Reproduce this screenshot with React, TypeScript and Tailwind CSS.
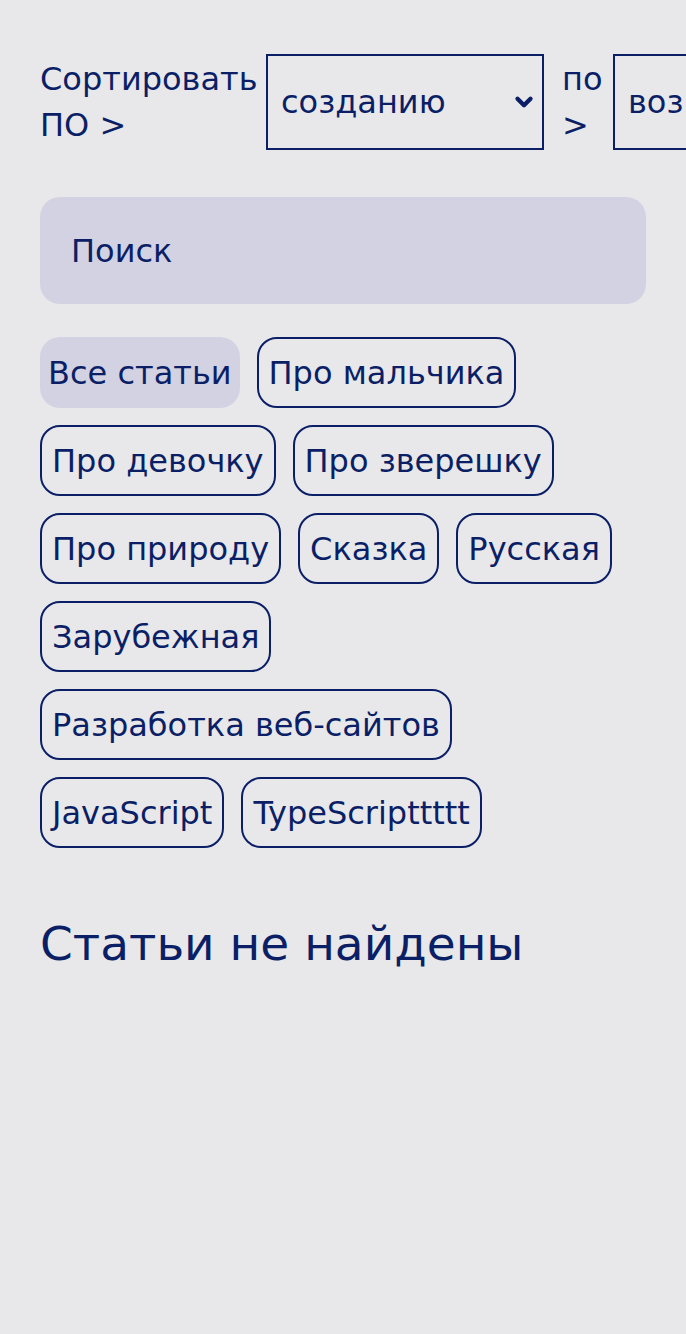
import { ChevronDown } from "lucide-react";

const tags = [
  "Про мальчика",
  "Про девочку",
  "Про зверешку",
  "Про природу",
  "Сказка",
  "Русская",
  "Зарубежная",
  "Разработка веб-сайтов",
  "JavaScript",
  "TypeScripttttt",
];

export default function App() {
  return (
    <main
      className="min-h-screen overflow-hidden bg-[#e8e8eb] px-10 pt-[54px] text-[#0b1f66]"
      style={{ fontFamily: '"DejaVu Sans", sans-serif' }}
    >
      <div className="flex w-[800px] items-center">
        <label className="w-[220px] shrink-0 text-[32px] leading-[46px]">Сортировать ПО &gt;</label>
        <div className="relative ml-[6px] h-[96px] w-[278px] shrink-0 border-2 border-[#0b1f66]">
          <select className="h-full w-full appearance-none bg-transparent pl-[13px] text-[32px] text-[#0b1f66] outline-none">
            <option>созданию</option>
          </select>
          <ChevronDown className="pointer-events-none absolute right-[5px] top-[33px] h-[26px] w-[26px]" strokeWidth={4} />
        </div>
        <label className="ml-[18px] w-[44px] shrink-0 text-[32px] leading-[46px]">по &gt;</label>
        <div className="relative ml-[7px] h-[96px] w-[278px] shrink-0 border-2 border-[#0b1f66]">
          <select className="h-full w-full appearance-none bg-transparent pl-[13px] text-[32px] text-[#0b1f66] outline-none">
            <option>возрастанию</option>
          </select>
        </div>
      </div>

      <input
        placeholder="Поиск"
        className="mt-[47px] block h-[107px] w-full rounded-[20px] bg-[#d3d2e3] px-[31px] text-[32px] text-[#0b1f66] outline-none placeholder:text-[#0b1f66]"
      />

      <div className="mt-[33px] flex flex-wrap gap-[17px]">
        <button className="flex h-[71px] items-center rounded-[20px] border-2 border-transparent bg-[#d3d2e3] px-[6px] text-[32px]">
          Все статьи
        </button>
        {tags.map((t) => (
          <button
            key={t}
            className="flex h-[71px] items-center rounded-[20px] border-2 border-[#0b1f66] px-[10px] text-[32px]"
          >
            {t}
          </button>
        ))}
      </div>

      <h2 className="mt-[64px] text-[47px] leading-[64px]">Статьи не найдены</h2>
    </main>
  );
}
